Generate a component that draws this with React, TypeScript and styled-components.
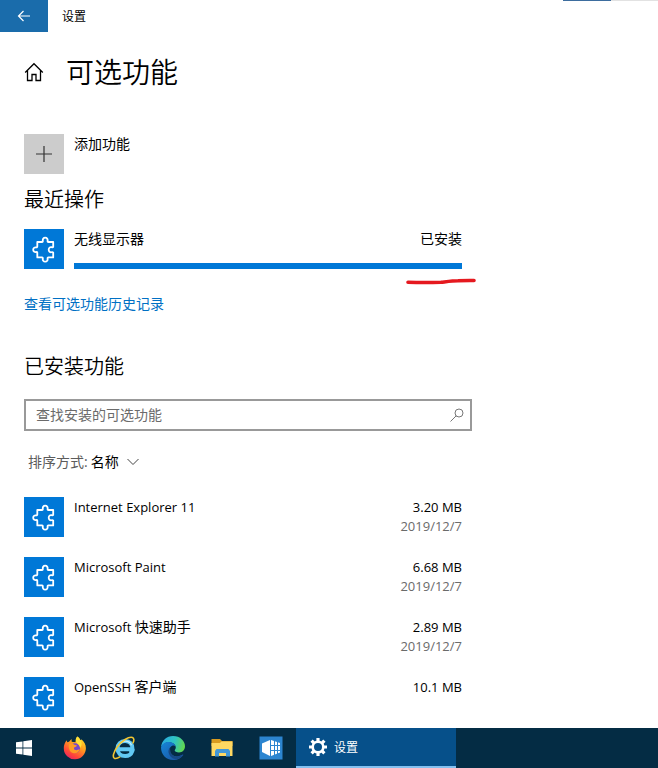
import React from "react";
import styled, { createGlobalStyle } from "styled-components";

const GlobalStyle = createGlobalStyle`
  *, *::before, *::after { box-sizing: border-box; }
  body { margin: 0; background: #fff; }
  body, button, input, select {
    font-family: "Open Sans", "Noto Sans CJK SC", sans-serif;
    color: #000;
  }
`;

const Shell = styled.div`
  display: flex;
  flex-direction: column;
  height: 100vh;
`;

const TitleBar = styled.header`
  display: flex;
  flex: none;
  height: 32px;
`;

const BackButton = styled.button`
  display: grid;
  place-items: center;
  width: 48px;
  border: 0;
  padding: 0;
  background: #1a6cab;
`;

const WindowTitle = styled.span`
  flex: 1;
  padding-left: 14px;
  font-size: 12px;
  line-height: 34px;
`;

const EdgeStrip = styled.span<{ $color: string; $width: number }>`
  width: ${(p) => p.$width}px;
  height: 1px;
  background: ${(p) => p.$color};
`;

const Main = styled.main`
  flex: 1;
  min-height: 0;
  overflow: hidden auto;
  padding: 20px 24px 0;
`;

const Column = styled.div`
  max-width: 448px;
`;

const PageHeading = styled.div`
  display: flex;
  align-items: center;
  gap: 22px;
  height: 40px;
`;

const PageTitle = styled.h1`
  margin: 0;
  font-size: 28px;
  font-weight: 350;
  line-height: 40px;
`;

const SectionTitle = styled.h2<{ $top: number; $bottom: number }>`
  margin: ${(p) => p.$top}px 0 ${(p) => p.$bottom}px;
  font-size: 20px;
  font-weight: 350;
  line-height: 28px;
`;

const AddButton = styled.button`
  display: flex;
  align-items: flex-start;
  gap: 10px;
  margin-top: 42px;
  border: 0;
  padding: 0;
  background: none;
  font-size: 14px;
  line-height: 20px;
`;

const Tile = styled.span<{ $muted?: boolean }>`
  display: grid;
  flex: none;
  place-items: center;
  width: 40px;
  height: 40px;
  background: ${(p) => (p.$muted ? "#ccc" : "#0078d7")};
`;

const FeatureRow = styled.div`
  position: relative;
  display: flex;
  gap: 10px;
  height: 40px;
  margin-right: 10px;
  font-size: 14px;
  line-height: 20px;
`;

const FeatureBody = styled.div`
  display: flex;
  flex: 1;
  flex-direction: column;
  justify-content: space-between;
`;

const Line = styled.div`
  display: flex;
  justify-content: space-between;
`;

const Latin = styled.span`
  font-size: 13px;
`;

const Meta = styled.div`
  display: flex;
  flex-direction: column;
  text-align: right;
  font-size: 13px;
  line-height: 20px;
`;

const InstalledOn = styled.time`
  color: #6b6b6b;
  line-height: 18px;
`;

const Progress = styled.div`
  height: 6px;
  background: #0078d7;
`;

const PenMark = styled.svg`
  position: absolute;
  right: -14px;
  top: 48px;
`;

const HistoryLink = styled.a`
  display: block;
  width: fit-content;
  margin-top: 25px;
  color: #0070c4;
  font-size: 14px;
  line-height: 20px;
  text-decoration: none;
`;

const SearchBox = styled.label`
  display: flex;
  align-items: center;
  height: 32px;
  border: 2px solid #999;
  padding: 0 6px 0 10px;
`;

const SearchInput = styled.input`
  flex: 1;
  min-width: 0;
  border: 0;
  padding: 0;
  outline: 0;
  background: none;
  font-size: 14px;
  line-height: 20px;
  &::placeholder { color: #6b6b6b; opacity: 1; }
`;

const SortBar = styled.div`
  display: flex;
  align-items: center;
  gap: 3px;
  height: 20px;
  margin: 21px 0 25px 4px;
  font-size: 14px;
  line-height: 20px;
`;

const SortLabel = styled.label`
  color: #5c5c5c;
`;

const SortControl = styled.span`
  display: grid;
  align-items: center;
  & > * { grid-area: 1 / 1; }
  & > svg { justify-self: end; pointer-events: none; }
`;

const SortSelect = styled.select`
  appearance: none;
  border: 0;
  padding: 0 20px 0 0;
  background: none;
  font-size: 14px;
  line-height: 20px;
`;

const FeatureList = styled.ul`
  display: grid;
  gap: 20px;
  margin: 0;
  padding: 0;
  list-style: none;
`;

const Taskbar = styled.nav`
  display: flex;
  flex: none;
  height: 40px;
  background: #042c44;
`;

const TaskButton = styled.button`
  display: grid;
  place-items: center;
  width: 49px;
  border: 0;
  padding: 0;
  background: none;
  &:first-child { width: 50px; padding-right: 2px; }
`;

const ActiveTask = styled.button`
  display: flex;
  align-items: center;
  gap: 6px;
  width: 160px;
  margin-left: 1px;
  border: 0;
  border-bottom: 2px solid #84c0f0;
  padding: 0 12px;
  background: #06508a;
  color: #fff;
  font-size: 12px;
`;

const PuzzleTile = () => (
  <Tile>
    <svg width="40" height="40" viewBox="0 0 40 40" fill="none" stroke="#fff" strokeWidth="1.8" strokeLinejoin="round" aria-hidden="true">
      <path d="M13.300 13H18c.7 0 .9-.5.8-1.100C18.500 10 19.500 8.700 21.200 8.700s2.700 1.300 2.400 3.200c-.1.600.1 1.100.8 1.100h4.800v4.900c-.4.500-.9.500-1.500.3-1.700-.4-3 .7-3 2.500s1.300 2.900 3 2.500c.6-.2 1.100-.2 1.500.3v4.900h-4.800c-.7 0-.9.500-.8 1.100.3 1.800-.7 3.100-2.400 3.100s-2.700-1.300-2.400-3.100c.1-.6-.1-1.100-.8-1.100h-4.700v-4.600c0-.7-.5-.9-1.100-.8-1.800.2-3-.7-3-2.300s1.200-2.600 3-2.300c.6.100 1.100-.1 1.100-.8z" />
    </svg>
  </Tile>
);

const FirefoxIcon = () => (
  <svg width="24" height="24" viewBox="0 0 24 24" aria-hidden="true">
    <defs>
      <linearGradient id="ff" x1=".8" y1="0" x2=".2" y2="1">
        <stop offset="0" stopColor="#ffe226" /><stop offset=".4" stopColor="#ff9a1f" />
        <stop offset=".75" stopColor="#ff4639" /><stop offset="1" stopColor="#e61f67" />
      </linearGradient>
    </defs>
    <path fill="url(#ff)" d="M2.200 6.500 3.500 4.300l.8 2 1.700-.6L8.500 3l.2 2.800 3.600.4 2-5.700c1.500.8 2.400 2 2.900 3.500l1.400-.4c2.500 2 4.300 5 4.300 8.700A11 11 0 0 1 12 23.300 11 11 0 0 1 .8 12.400c0-2.200.5-4.200 1.400-5.900z" />
    <circle cx="12" cy="12.200" r="5" fill="#7746c9" />
    <path fill="#ff9b25" d="M5.800 8.200c2-1.200 4-.7 5.500.6l2.700.6c-.4 1.200-1.800 1.500-2.900 2-.4 1.200.1 2.300 1.500 2.700 1.600.5 2.500-.8 4.200-.5-1.100 2.700-3.200 4-5.700 3.700-3.600-.4-5.800-3.800-5.300-9.100z" />
    <path fill="#ffe039" d="M14.300.5c-1.800 1.700-2.200 4-.8 6 1.300 1.800 3.600 2.700 3.600 5.400 2.200-2.800 2-5.700.1-8-.5-1.400-1.500-2.600-2.900-3.400z" />
  </svg>
);

const InternetExplorerIcon = () => (
  <svg width="24" height="24" viewBox="0 0 24 24" fill="none" aria-hidden="true">
    <path d="M7 13.200h13.500c.2-5-3-8.200-7.300-8.200-4.500 0-7.700 3.200-7.700 7.500 0 4.600 3.300 7.600 7.700 7.600 3.500 0 6-1.700 7-4.700h-3" stroke="#62c9f4" strokeWidth="4" />
    <path d="M8 8c1-1.500 2.700-2.800 5-2.800 3.500 0 5.500 1.500 6.500 4" stroke="#c5effd" strokeWidth="1.200" />
    <path d="M20.800 7.500c1.600-3.200 1.300-5.500-.4-6.100C17 .2 9.300 5 5 11.200c-3.500 5-4.700 9.700-2.700 11 1.300.8 3.500.1 6-1.600" stroke="#f3c632" strokeWidth="1.600" />
  </svg>
);

const EdgeIcon = () => (
  <svg width="24" height="24" viewBox="0 0 24 24" aria-hidden="true">
    <defs>
      <linearGradient id="edgeTop" x1="0" y1=".3" x2="1" y2=".5">
        <stop offset="0" stopColor="#29a9e3" /><stop offset=".55" stopColor="#2fc4c2" /><stop offset="1" stopColor="#62d84e" />
      </linearGradient>
      <linearGradient id="edgeLow" x1="0" y1="0" x2="1" y2="1">
        <stop offset="0" stopColor="#1686d9" /><stop offset="1" stopColor="#1b4f9c" />
      </linearGradient>
    </defs>
    <path fill="url(#edgeTop)" d="M0 11C.8 4.600 5.600 0 12 0c7.200 0 12 5 12 10.300 0 3.700-2.500 6.100-6 6.100-2.500 0-4.300-.8-4.300-1.900 0-.8 1.100-1.200 1.100-3 0-2.700-3-5.200-7-5.200-3.300 0-6 1.700-7.800 4.700z" />
    <path fill="url(#edgeLow)" d="M0 11.500C1 8 4 6 7.800 6c3.600 0 6.200 1.800 6.900 4.200-1-.7-2-.9-3-.6-2 .6-3.300 2.500-3.200 4.700.2 3.600 3.400 6.100 7.300 6.100 2.200 0 4.100-.7 5.800-1.800.4-.2.800.2.500.6A12 12 0 0 1 12 24C5.200 24 0 18.500 0 11.500z" />
    <path fill="#174985" d="M9.200 11.400C7.500 13 7.100 15 7.800 17.200c1.200 3.900 4.800 6.200 8.800 5.800 2.300-.8 4.300-2.200 5.600-4.200-6.500 4-13.900.6-13-7.400z" />
  </svg>
);

const FolderIcon = () => (
  <svg width="24" height="24" viewBox="0 0 24 24" aria-hidden="true">
    <path fill="#d99b20" d="M1.500 3h8.500l2 2h10.500v5h-21z" />
    <path fill="#ffd862" d="M1.500 7h8.500l1.500-1.500h11V20h-21z" />
    <path fill="#4297d7" d="M5 20.500v-5.500l1.500-2h12l1.500 2v5.500h-4v-3.500H9v3.500z" />
  </svg>
);

const ServerIcon = () => (
  <svg width="24" height="24" viewBox="0 0 24 24" aria-hidden="true">
    <path fill="#2c85d0" d="M.5.5h23v23H.5z" />
    <path fill="#fff" d="M3 7.500 11 4v16l-8-4z" />
    <path fill="#fff" d="m12 4 9 3v9.500L12 20z" />
    <path stroke="#2c85d0" d="M12 9.500h9M12 14.500h9M15.500 4v16M18.500 5v14" />
  </svg>
);

const GearIcon = () => (
  <svg width="20" height="20" viewBox="0 0 20 20" fill="none" stroke="#fff" aria-hidden="true">
    <circle cx="10" cy="10" r="5.300" strokeWidth="2.600" />
    <path strokeWidth="3.200" d="M10 1v3M10 16v3M1 10h3M16 10h3M3.600 3.600l2.200 2.200M14.200 14.200l2.200 2.200M3.600 16.400l2.200-2.200M14.200 5.800l2.200-2.200" />
  </svg>
);

type Feature = { latin: string; local?: string; size: string; date?: string };

const features: Feature[] = [
  { latin: "Internet Explorer 11", size: "3.20 MB", date: "2019/12/7" },
  { latin: "Microsoft Paint", size: "6.68 MB", date: "2019/12/7" },
  { latin: "Microsoft ", local: "快速助手", size: "2.89 MB", date: "2019/12/7" },
  { latin: "OpenSSH ", local: "客户端", size: "10.1 MB" },
];

export default function App() {
  return (
    <Shell>
      <GlobalStyle />
      <TitleBar>
        <BackButton aria-label="返回">
          <svg width="14" height="12" viewBox="0 0 14 12" fill="none" stroke="#fff" strokeWidth="1.200" aria-hidden="true">
            <path d="M13 6H1.500M6.500 1l-5 5 5 5" />
          </svg>
        </BackButton>
        <WindowTitle>设置</WindowTitle>
        <EdgeStrip $color="#3d6d9e" $width={48} />
        <EdgeStrip $color="#e2e2e2" $width={47} />
      </TitleBar>

      <Main>
        <Column>
          <PageHeading>
            <svg width="20" height="20" viewBox="0 0 20 20" fill="none" stroke="#000" strokeWidth="1.300" aria-hidden="true">
              <path d="m1.200 10.500 8.800-8.800 8.800 8.800M3.500 8.500v10H8v-6h4v6h4.500v-10" />
            </svg>
            <PageTitle>可选功能</PageTitle>
          </PageHeading>

          <AddButton>
            <Tile $muted>
              <svg width="16" height="16" viewBox="0 0 16 16" stroke="#333" strokeWidth="1.200" aria-hidden="true">
                <path d="M8 0v16M0 8h16" />
              </svg>
            </Tile>
            添加功能
          </AddButton>

          <SectionTitle $top={12} $bottom={15}>最近操作</SectionTitle>
          <FeatureRow>
            <PuzzleTile />
            <FeatureBody>
              <Line>
                <span>无线显示器</span>
                <span>已安装</span>
              </Line>
              <Progress role="progressbar" aria-label="无线显示器" aria-valuenow={100} />
            </FeatureBody>
            <PenMark width="70" height="8" viewBox="0 0 70 8" fill="none" stroke="#e5191f" strokeWidth="3.600" strokeLinecap="round" aria-hidden="true">
              <path d="M2 5.300c11 .3 22 .3 33 0 7-.8 12-1.500 17-1.500 5-.3 10-.4 16-.3" />
            </PenMark>
          </FeatureRow>
          <HistoryLink href="#history">查看可选功能历史记录</HistoryLink>

          <SectionTitle $top={39} $bottom={18}>已安装功能</SectionTitle>
          <SearchBox>
            <SearchInput type="text" aria-label="查找安装的可选功能" placeholder="查找安装的可选功能" />
            <svg width="14" height="14" viewBox="0 0 14 14" fill="none" stroke="#777" aria-hidden="true">
              <circle cx="9" cy="5" r="4" />
              <path d="M6.200 7.800.5 13.500" />
            </svg>
          </SearchBox>

          <SortBar>
            <SortLabel htmlFor="sort">排序方式:</SortLabel>
            <SortControl>
              <SortSelect id="sort">
                <option>名称</option>
              </SortSelect>
              <svg width="12" height="8" viewBox="0 0 12 8" fill="none" stroke="#444" aria-hidden="true">
                <path d="m.5 1 5.500 5.500L11.500 1" />
              </svg>
            </SortControl>
          </SortBar>

          <FeatureList>
            {features.map((f) => (
              <li key={f.latin}>
                <FeatureRow>
                  <PuzzleTile />
                  <FeatureBody>
                    <Line>
                      <span>
                        <Latin>{f.latin}</Latin>
                        {f.local}
                      </span>
                      <Meta>
                        <span>{f.size}</span>
                        {f.date && <InstalledOn>{f.date}</InstalledOn>}
                      </Meta>
                    </Line>
                  </FeatureBody>
                </FeatureRow>
              </li>
            ))}
          </FeatureList>
        </Column>
      </Main>

      <Taskbar>
        <TaskButton aria-label="开始">
          <svg width="16" height="16" viewBox="0 0 16 16" fill="#fff" aria-hidden="true">
            <path d="M0 2.300 6.500 1.400v6.200H0zM7.300 1.300 16 0v7.600H7.300zM0 8.400h6.500v6.200L0 13.700zM7.300 8.400H16V16l-8.700-1.300z" />
          </svg>
        </TaskButton>
        <TaskButton aria-label="Firefox"><FirefoxIcon /></TaskButton>
        <TaskButton aria-label="Internet Explorer"><InternetExplorerIcon /></TaskButton>
        <TaskButton aria-label="Microsoft Edge"><EdgeIcon /></TaskButton>
        <TaskButton aria-label="文件资源管理器"><FolderIcon /></TaskButton>
        <TaskButton aria-label="服务器管理器"><ServerIcon /></TaskButton>
        <ActiveTask>
          <GearIcon />
          设置
        </ActiveTask>
      </Taskbar>
    </Shell>
  );
}
